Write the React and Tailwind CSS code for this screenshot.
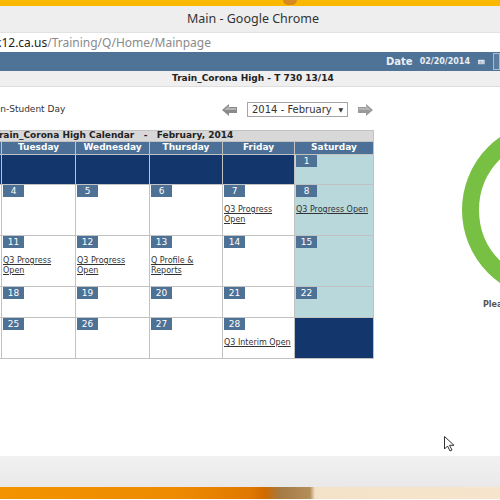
import React from "react";

const V = { fontFamily: '"DejaVu Sans", Verdana, sans-serif' };
const UI = { fontFamily: '"Noto Sans", "Open Sans", sans-serif' };

const days = ["Sunday", "Monday", "Tuesday", "Wednesday", "Thursday", "Friday", "Saturday"];

const ev = {
  7: ["Q3 Progress", "Open"],
  8: ["Q3 Progress Open"],
  11: ["Q3 Progress", "Open"],
  12: ["Q3 Progress", "Open"],
  13: ["Q Profile &", "Reports"],
  28: ["Q3 Interim Open"],
};

const weeks = [
  { h: "h-[29px]", d: [0, 0, 0, 0, 0, 0, 1] },
  { h: "h-[50px]", d: [2, 3, 4, 5, 6, 7, 8] },
  { h: "h-[50px]", d: [9, 10, 11, 12, 13, 14, 15] },
  { h: "h-[30px]", d: [16, 17, 18, 19, 20, 21, 22] },
  { h: "h-[40px]", d: [23, 24, 25, 26, 27, 28, 0] },
];

function Cell({ n, col, h }) {
  if (!n) return <div className={`${h} bg-[#13366c]`} />;
  const weekend = col === 0 || col === 6;
  return (
    <div className={`${h} ${weekend ? "bg-[#b8d8dc]" : "bg-white"} overflow-hidden`}>
      <div className="ml-[1px] w-[21px] h-[12px] bg-[#4e7196] text-white text-[9px] leading-[12px] text-center">
        {n}
      </div>
      {ev[n] && (
        <div className="mt-[8px] pl-[1px] text-[8px] leading-[10px] text-[#333] underline whitespace-nowrap">
          {ev[n].map((l, i) => (
            <div key={i}>{l}</div>
          ))}
        </div>
      )}
    </div>
  );
}

function Arrow({ flip, color }) {
  return (
    <svg width="15" height="12" viewBox="0 0 15 12" className={flip ? "-scale-x-100" : ""}>
      <polygon points="0,6 7,0 7,3 15,3 15,9 7,9 7,12" fill={color} />
      <polygon points="2,6 7,1.8 7,4 14,4 14,6" fill="#b5b5b5" />
    </svg>
  );
}

export default function App() {
  return (
    <div className="w-[500px] h-[500px] overflow-hidden bg-white flex flex-col relative" style={V}>
      {/* top yellow band */}
      <div className="h-[6px] bg-[#fbb800] shrink-0 flex">
        <div className="ml-[283px] w-[14px] h-[5px] rounded-b-full bg-[#d88a20]" />
      </div>
      {/* title bar */}
      <div className="h-[26px] shrink-0 bg-[#eeeeee] flex items-center justify-center pl-[6px] text-[12.5px] text-[#333]" style={UI}>
        Main - Google Chrome
      </div>
      {/* address bar */}
      <div className="h-[20px] shrink-0 bg-white flex items-center text-[12px] whitespace-nowrap border-t border-[#e2e2e2]" style={UI}>
        <span className="-ml-[5px] text-[#222]">k12.ca.us</span>
        <span className="text-[#8a8a8a]">/Training/Q/Home/Mainpage</span>
      </div>
      {/* blue bar */}
      <div className="h-[19px] shrink-0 bg-[#4f7397] flex items-center pl-[386px] text-[#e9eef5] whitespace-nowrap">
        <span className="text-[10px] font-bold">Date</span>
        <span className="ml-[7px] text-[8px] font-bold">02/20/2014</span>
        <svg width="12" height="8" viewBox="0 0 12 8" className="ml-[8px]">
          <rect x="0" y="0" width="12" height="8" fill="#eef2f8" />
          <path d="M2 1.5v6.5M4.5 1.5v6.5M7 1.5v6.5M9.5 1.5v6.5" stroke="#6b86a8" strokeWidth="0.9" />
        </svg>
        <div className="ml-[8px] w-[12px] h-[17px] border border-[#a9bdd2] bg-[#5a7c9f]" />
      </div>
      {/* sub header */}
      <div className="h-[16px] shrink-0 bg-[#efefef] border-b border-[#dedede] flex items-center pl-[172px] text-[9px] font-bold text-[#222] whitespace-nowrap">
        Train_Corona High - T 730 13/14
      </div>

      {/* main */}
      <div className="h-[369px] shrink-0 flex">
        <div className="w-[374px] shrink-0">
          <div className="-ml-[147px] w-[521px]">
            {/* legend + nav */}
            <div className="mt-[15px] h-[15px] flex items-center">
              <div className="w-[369px] shrink-0 flex items-center">
                <div className="ml-[115px] w-[12px] h-[10px] bg-[#b8d8dc] border border-[#999]" />
                <span className="ml-[8px] text-[9px] text-[#333] whitespace-nowrap">Non-Student Day</span>
              </div>
              <Arrow color="#8a8a8a" />
              <div className="ml-[10px] w-[101px] h-[15px] border border-[#a5a5a5] bg-white flex items-center justify-between px-[4px] text-[10px] text-[#333] whitespace-nowrap">
                <span>2014 - February</span>
                <span className="text-[6px]">▼</span>
              </div>
              <div className="ml-[10px]">
                <Arrow flip color="#9a9a9a" />
              </div>
            </div>

            {/* calendar */}
            <div className="mt-[13px] border border-[#c2c2c2] bg-[#c2c2c2] grid grid-cols-[73px_73px_73px_73px_72px_71px_78px] gap-px">
              <div className="col-span-7 h-[10px] bg-[#d8d8d8] flex items-center justify-center text-[9px] font-bold text-[#222] whitespace-nowrap">
                Train_Corona High Calendar&nbsp;&nbsp;&nbsp;-&nbsp;&nbsp;&nbsp;February, 2014
              </div>
              {days.map((d) => (
                <div key={d} className="h-[12px] bg-[#4b6f96] flex items-center justify-center text-[9px] font-bold text-white">
                  {d}
                </div>
              ))}
              {weeks.map((w, wi) =>
                w.d.map((n, ci) => <Cell key={`${wi}-${ci}`} n={n} col={ci} h={w.h} />)
              )}
            </div>
          </div>
        </div>

        {/* spinner */}
        <div className="flex-1 min-w-0 overflow-hidden">
          <div className="ml-[87px] mt-[33px] w-[180px]">
            <svg width="180" height="180" viewBox="0 0 180 180">
              <circle cx="90" cy="90" r="80.5" fill="none" stroke="#78c043" strokeWidth="17" />
            </svg>
            <div className="pl-[22px] text-[8px] leading-[10px] font-bold text-[#555] whitespace-nowrap">
              Please wait...
            </div>
          </div>
        </div>
      </div>

      {/* bottom bands */}
      <div className="h-[31px] shrink-0 bg-gradient-to-b from-[#f1f1f1] to-[#e9e9e9]" />
      <div className="h-[12px] shrink-0 bg-[linear-gradient(to_right,#f39300_0%,#ee8b00_35%,#e07800_50%,#cf6a00_53%,#a57a45_56%,#b38e58_62%,#f4e2c8_63%,#f6e4cc_100%)]" />

      {/* mouse cursor */}
      <svg width="11" height="16" viewBox="0 0 11 16" className="absolute left-[444px] top-[436px]">
        <path d="M0.5 0.5 L0.5 13 L3.5 10 L6 15 L8 14 L5.5 9.3 L10 9.3 Z" fill="white" stroke="#333" strokeWidth="1" />
      </svg>
    </div>
  );
}
